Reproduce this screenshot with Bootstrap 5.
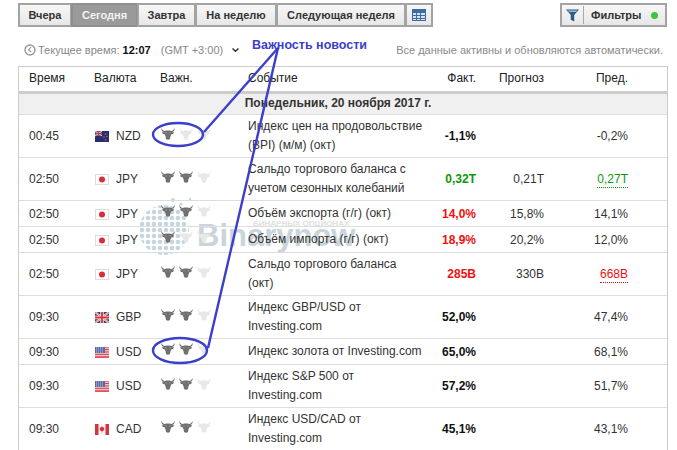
<!DOCTYPE html>
<html lang="ru">
<head>
<meta charset="utf-8">
<title>Экономический календарь</title>
<link href="https://cdn.jsdelivr.net/npm/bootstrap@5.3.0/dist/css/bootstrap.min.css" rel="stylesheet">
<style>
html,body{height:450px;overflow:hidden;background:#fff}
body{font-family:"Liberation Sans",Arial,sans-serif;font-size:12px;color:#333;line-height:18px}
.page-wrap{position:relative;width:677px;height:450px;padding:3px 10px 0 18px}
.tool-btn{--bs-btn-padding-x:0;--bs-btn-padding-y:0;--bs-btn-font-size:11px;--bs-btn-border-radius:0;height:24px;line-height:20px;font-weight:700;color:#333;background:linear-gradient(#f7f7f7,#e7e7e7);border:2px solid #a3a3a3}
.tool-btn.is-on{background:#9a9a9a;color:#f2f2f2;border-color:#8f8f8f}
.w-a{width:54px}.w-b{width:67px}.w-c{width:59px}.w-d{width:82px}.w-e{width:130px}.w-f{width:28px}
.filter-box{height:24px;width:107px;font-size:11px;background:linear-gradient(#f7f7f7,#e7e7e7);border:1px solid #a3a3a3;border-width:2px;font-weight:700}
.filter-sep{width:1px;height:18px;background:#aaa;margin:0 7px 0 4px}
.green-dot{width:7px;height:7px;border-radius:50%;background:#3fc43f;margin-left:10px}
.sub-bar{height:39px;padding-top:7px;color:#888;font-size:11px}
.sub-bar b{color:#111}
.clock-ico{margin:0 2px 0 6px}
.gmt-txt{margin-left:10px}
.auto-note{color:#8a8a8a;margin-right:4px}
.cal-wrap{position:relative;border:1px solid #ccc;border-bottom:0;width:650px;height:390px}
.water{position:absolute;left:120px;top:130px;z-index:0}
.cal-table{position:relative;z-index:1;table-layout:fixed;width:648px;border-collapse:collapse;margin:0;--bs-table-bg:transparent;color:#333}
.cal-table th,.cal-table td{padding:0;border:0;border-bottom:1px solid #ddd;vertical-align:middle;font-size:12px;line-height:19px}
.cal-table thead th{height:25px;font-weight:400;border-bottom:3px solid #ccc;color:#222}
.cal-table .day-row td{height:22px;background:#f0f0f0;font-weight:700;text-align:center;padding-right:10px}
.r-tall td{height:43px;padding-top:2px}
.r-low td{height:26px;padding-top:2px}
.r-tall td.pad-e,.r-low td.pad-e{padding-top:0}
.pad-t{padding-left:10px!important}
.pad-c{padding-left:11px!important}
.pad-i{padding-left:11px!important}
.pad-e{padding-left:10px!important}
.cal-table thead th.pad-c,.cal-table thead th.pad-i{padding-left:10px!important}
.ta-r{text-align:right;padding-right:5px!important}
.flag{vertical-align:-2px;margin-right:7px;width:14px;height:11px}
.bulls{display:flex;gap:4px;margin-top:-6px}
.bull{width:14px;height:12px;fill:#707070}
.bull.off{fill:#e7e7e7}
.val-g{color:#0a9a0a;font-weight:700}
.val-r{color:#f01010;font-weight:700}
.val-k{color:#111;font-weight:700}
.prev-g{color:#0a9a0a;border-bottom:1px dotted #0a9a0a;padding-bottom:1px}
.prev-r{color:#f01010;border-bottom:1px dotted #f01010;padding-bottom:1px}
.note-ov{position:absolute;left:0;top:0;z-index:5;pointer-events:none}
.note-text{position:absolute;left:252px;top:36px;z-index:6;color:#3c40c8;font-weight:700;font-size:12.5px}
</style>
</head>
<body>
<svg width="0" height="0" class="d-block position-absolute">
<defs>
<symbol id="b" viewBox="0 0 14 12"><path d="M.5 0C0 2 1.2 3.6 3 4L.8 4.6 2 6 3.6 6.2 4.6 8.4 5 11Q7 12.4 9 11L9.4 8.4 10.4 6.2 12 6 13.2 4.6 11 4C12.8 3.6 14 2 13.5 0 13 1.6 11.8 2.8 10 3 9 2.4 5 2.4 4 3 2.2 2.8 1 1.6.5 0Z"/><circle cx="5" cy="5" r=".7" fill="#fff" opacity=".3"/><circle cx="9" cy="5" r=".7" fill="#fff" opacity=".3"/></symbol>
<symbol id="fnz" viewBox="0 0 14 11"><rect width="14" height="11" fill="#27306e"/><path d="M0 0h7v5H0z" fill="#5a5f95"/><path d="M0 0l7 5M7 0L0 5" stroke="#e8d8dc" stroke-width="1"/><path d="M3.5 0v5M0 2.5h7" stroke="#d33" stroke-width="1.2"/><circle cx="10.5" cy="3" r=".8" fill="#e55"/><circle cx="9" cy="6" r=".8" fill="#e55"/><circle cx="12" cy="5.5" r=".8" fill="#e55"/><circle cx="10.5" cy="9" r=".8" fill="#e55"/></symbol>
<symbol id="fjp" viewBox="0 0 14 11"><rect x=".5" y=".5" width="13" height="10" fill="#fff" stroke="#ddd"/><circle cx="7" cy="5.5" r="3" fill="#dc2b3a"/></symbol>
<symbol id="fgb" viewBox="0 0 14 11"><rect width="14" height="11" fill="#3a3f78"/><path d="M0 0l14 11M14 0L0 11" stroke="#eee" stroke-width="2"/><path d="M0 0l14 11M14 0L0 11" stroke="#d44" stroke-width=".7"/><path d="M7 0v11M0 5.5h14" stroke="#eee" stroke-width="3.4"/><path d="M7 0v11M0 5.5h14" stroke="#d33" stroke-width="1.8"/></symbol>
<symbol id="fus" viewBox="0 0 14 11"><rect width="14" height="11" fill="#f6f6f6"/><path d="M0 .8h14M0 2.5h14M0 4.2h14M0 5.9h14M0 7.6h14M0 9.3h14M0 10.6h14" stroke="#d9303c" stroke-width=".9"/><rect width="10" height="6" fill="#5a68a8"/><path d="M1 1h8M1 3h8M1 5h8" stroke="#d5d8ea" stroke-width=".9" stroke-dasharray="1 1"/></symbol>
<symbol id="fca" viewBox="0 0 14 11"><rect width="14" height="11" fill="#f6f6f6"/><rect width="3.5" height="11" fill="#d8323c"/><rect x="10.5" width="3.5" height="11" fill="#d8323c"/><path d="M7 2l1 1.6 1.3-.4-.4 2 .8.3L8 7H7.4v1.4H6.6V7H6L4.3 5.5l.8-.3-.4-2 1.3.4Z" fill="#d8323c"/></symbol>
<pattern id="dots" width="6" height="6" patternUnits="userSpaceOnUse"><circle cx="3" cy="3" r="2.3" fill="#c5d6df"/></pattern>
</defs>
</svg>

<div class="page-wrap">
  <div class="d-flex justify-content-between">
    <div class="btn-group" role="group">
      <button type="button" class="btn tool-btn w-a">Вчера</button>
      <button type="button" class="btn tool-btn w-b is-on">Сегодня</button>
      <button type="button" class="btn tool-btn w-c">Завтра</button>
      <button type="button" class="btn tool-btn w-d">На неделю</button>
      <button type="button" class="btn tool-btn w-e">Следующая неделя</button>
      <button type="button" class="btn tool-btn w-f d-flex align-items-center justify-content-center" aria-label="Календарь">
        <svg width="14" height="12" viewBox="0 0 14 12"><rect width="14" height="12" fill="#3d6ba3"/><path d="M1 4h3v2H1zM5 4h3v2H5zM9 4h4v2H9zM1 7h3v2H1zM5 7h3v2H5zM9 7h4v2H9zM1 10h3v1H1zM5 10h3v1H5zM9 10h4v1H9z" fill="#d6e2f0"/></svg>
      </button>
    </div>
    <div class="filter-box d-flex align-items-center">
      <svg class="ms-1" width="13" height="13" viewBox="0 0 15 14"><path d="M0 0H15L9.5 6.5V14L5.5 12V6.5Z" fill="#2c5c84"/><path d="M2 1.2H13L11.5 3H3.5Z" fill="#9cb8cf"/></svg>
      <span class="filter-sep"></span>
      <span>Фильтры</span>
      <span class="green-dot"></span>
    </div>
  </div>

  <div class="sub-bar d-flex align-items-center justify-content-between">
    <div class="d-flex align-items-center">
      <svg class="clock-ico" width="12" height="12" viewBox="0 0 12 12"><circle cx="6" cy="6" r="5" fill="none" stroke="#999" stroke-width="1.4"/><path d="M7 3L4.6 6 7.2 8" fill="none" stroke="#999" stroke-width="1.2"/></svg>
      <span>Текущее время: <b>12:07</b></span>
      <span class="gmt-txt">(GMT +3:00)</span>
      <svg class="ms-2" width="9" height="6" viewBox="0 0 9 6"><path d="M1.5 1.5 4.5 4.3 7.5 1.5" fill="none" stroke="#333" stroke-width="1.5"/></svg>
    </div>
    <div class="auto-note">Все данные активны и обновляются автоматически.</div>
  </div>

  <div class="cal-wrap">
    <svg class="water" width="230" height="70" viewBox="0 0 230 70">
      <circle cx="25" cy="33" r="25" fill="url(#dots)"/>
      <circle cx="34" cy="3" r="2" fill="#c5d6df"/><circle cx="42" cy="7" r="1.6" fill="#c5d6df"/><circle cx="48" cy="13" r="1.4" fill="#c5d6df"/><circle cx="51" cy="2" r="1.2" fill="#c5d6df"/>
      <text x="58" y="49" font-family="Liberation Sans,Arial,sans-serif" font-weight="700" font-size="31" fill="#c9d5db">Binarynow</text>
      <text x="114" y="29" font-family="Liberation Sans,Arial,sans-serif" font-weight="700" font-size="8" fill="#e0e0e0">БИНАРНЫХ ОПЦИОНАХ</text>
    </svg>
    <table class="table cal-table">
      <colgroup><col style="width:65px"><col style="width:66px"><col style="width:88px"><col style="width:189px"><col style="width:54px"><col style="width:68px"><col style="width:84px"><col style="width:34px"></colgroup>
      <thead>
        <tr><th class="pad-t">Время</th><th class="pad-c">Валюта</th><th class="pad-i">Важн.</th><th class="pad-e">Событие</th><th class="ta-r">Факт.</th><th class="ta-r">Прогноз</th><th class="ta-r">Пред.</th><th></th></tr>
      </thead>
      <tbody>
        <tr class="day-row"><td colspan="8">Понедельник, 20 ноября 2017 г.</td></tr>
        <tr class="r-tall"><td class="pad-t">00:45</td><td class="pad-c"><svg class="flag"><use href="#fnz"/></svg>NZD</td><td class="pad-i"><div class="bulls"><svg class="bull"><use href="#b"/></svg><svg class="bull off"><use href="#b"/></svg><svg class="bull off"><use href="#b"/></svg></div></td><td class="pad-e">Индекс цен на продовольствие<br>(BPI) (м/м) (окт)</td><td class="ta-r val-k">-1,1%</td><td class="ta-r"></td><td class="ta-r">-0,2%</td><td></td></tr>
        <tr class="r-tall"><td class="pad-t">02:50</td><td class="pad-c"><svg class="flag"><use href="#fjp"/></svg>JPY</td><td class="pad-i"><div class="bulls"><svg class="bull"><use href="#b"/></svg><svg class="bull"><use href="#b"/></svg><svg class="bull off"><use href="#b"/></svg></div></td><td class="pad-e">Сальдо торгового баланса с<br>учетом сезонных колебаний</td><td class="ta-r val-g">0,32T</td><td class="ta-r">0,21T</td><td class="ta-r"><span class="prev-g">0,27T</span></td><td></td></tr>
        <tr class="r-low"><td class="pad-t">02:50</td><td class="pad-c"><svg class="flag"><use href="#fjp"/></svg>JPY</td><td class="pad-i"><div class="bulls"><svg class="bull"><use href="#b"/></svg><svg class="bull"><use href="#b"/></svg><svg class="bull off"><use href="#b"/></svg></div></td><td class="pad-e">Объём экспорта (г/г) (окт)</td><td class="ta-r val-r">14,0%</td><td class="ta-r">15,8%</td><td class="ta-r">14,1%</td><td></td></tr>
        <tr class="r-low"><td class="pad-t">02:50</td><td class="pad-c"><svg class="flag"><use href="#fjp"/></svg>JPY</td><td class="pad-i"><div class="bulls"><svg class="bull"><use href="#b"/></svg><svg class="bull off"><use href="#b"/></svg><svg class="bull off"><use href="#b"/></svg></div></td><td class="pad-e">Объём импорта (г/г) (окт)</td><td class="ta-r val-r">18,9%</td><td class="ta-r">20,2%</td><td class="ta-r">12,0%</td><td></td></tr>
        <tr class="r-tall"><td class="pad-t">02:50</td><td class="pad-c"><svg class="flag"><use href="#fjp"/></svg>JPY</td><td class="pad-i"><div class="bulls"><svg class="bull"><use href="#b"/></svg><svg class="bull"><use href="#b"/></svg><svg class="bull off"><use href="#b"/></svg></div></td><td class="pad-e">Сальдо торгового баланса<br>(окт)</td><td class="ta-r val-r">285B</td><td class="ta-r">330B</td><td class="ta-r"><span class="prev-r">668B</span></td><td></td></tr>
        <tr class="r-tall"><td class="pad-t">09:30</td><td class="pad-c"><svg class="flag"><use href="#fgb"/></svg>GBP</td><td class="pad-i"><div class="bulls"><svg class="bull"><use href="#b"/></svg><svg class="bull"><use href="#b"/></svg><svg class="bull off"><use href="#b"/></svg></div></td><td class="pad-e">Индекс GBP/USD от<br>Investing.com</td><td class="ta-r val-k">52,0%</td><td class="ta-r"></td><td class="ta-r">47,4%</td><td></td></tr>
        <tr class="r-low"><td class="pad-t">09:30</td><td class="pad-c"><svg class="flag"><use href="#fus"/></svg>USD</td><td class="pad-i"><div class="bulls"><svg class="bull"><use href="#b"/></svg><svg class="bull"><use href="#b"/></svg><svg class="bull off"><use href="#b"/></svg></div></td><td class="pad-e">Индекс золота от Investing.com</td><td class="ta-r val-k">65,0%</td><td class="ta-r"></td><td class="ta-r">68,1%</td><td></td></tr>
        <tr class="r-tall"><td class="pad-t">09:30</td><td class="pad-c"><svg class="flag"><use href="#fus"/></svg>USD</td><td class="pad-i"><div class="bulls"><svg class="bull"><use href="#b"/></svg><svg class="bull"><use href="#b"/></svg><svg class="bull off"><use href="#b"/></svg></div></td><td class="pad-e">Индекс S&amp;P 500 от<br>Investing.com</td><td class="ta-r val-k">57,2%</td><td class="ta-r"></td><td class="ta-r">51,7%</td><td></td></tr>
        <tr class="r-tall"><td class="pad-t">09:30</td><td class="pad-c"><svg class="flag"><use href="#fca"/></svg>CAD</td><td class="pad-i"><div class="bulls"><svg class="bull"><use href="#b"/></svg><svg class="bull"><use href="#b"/></svg><svg class="bull off"><use href="#b"/></svg></div></td><td class="pad-e">Индекс USD/CAD от<br>Investing.com</td><td class="ta-r val-k">45,1%</td><td class="ta-r"></td><td class="ta-r">43,1%</td><td></td></tr>
      </tbody>
    </table>
  </div>

  <svg class="note-ov" width="677" height="450" viewBox="0 0 677 450" fill="none" stroke="#3b3fc9" stroke-width="2.4">
    <path d="M278 48 204 132"/>
    <path d="M278 48 208 348"/>
    <ellipse cx="178" cy="134.5" rx="25" ry="11.5"/>
    <ellipse cx="180" cy="350.5" rx="27" ry="12.5"/>
  </svg>
  <div class="note-text">Важность новости</div>
</div>
</body>
</html>
